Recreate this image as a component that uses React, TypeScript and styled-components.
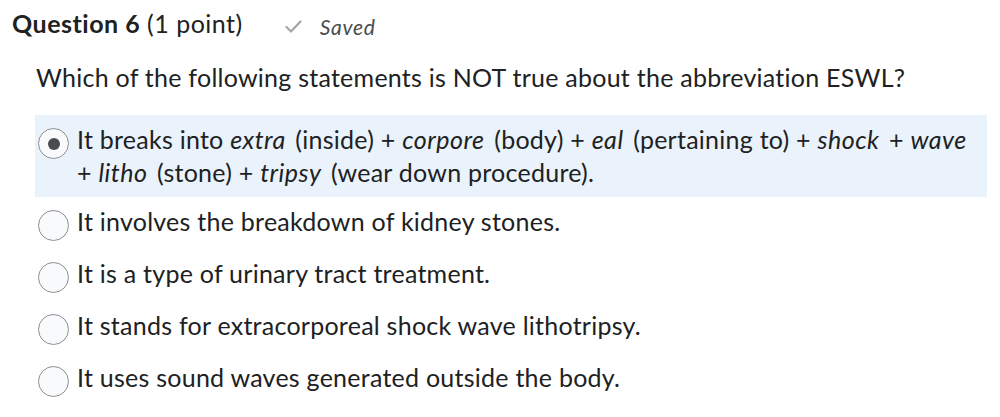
import React, { FC } from "react";
import styled, { createGlobalStyle } from "styled-components";

const GlobalStyle = createGlobalStyle`
  html, body {
    margin: 0;
    padding: 0;
    background: #ffffff;
  }
  body {
    font-family: Lato, "Noto Sans", sans-serif;
    color: #202122;
    font-variant-ligatures: none;
  }
`;

const Page = styled.div`
  width: 1000px;
  height: 417px;
  padding: 8px 0 0 12px;
  box-sizing: border-box;
  overflow: hidden;
`;

const Header = styled.div`
  display: flex;
  align-items: baseline;
  gap: 42px;
`;

const Title = styled.h2`
  margin: 0;
  font-size: 25px;
  line-height: 30px;
  letter-spacing: 0.5px;
  font-weight: 400;
  color: #202122;
  b {
    font-weight: 700;
  }
`;

const Status = styled.div`
  display: flex;
  align-items: center;
  gap: 18px;
  font-size: 21px;
  letter-spacing: 0.7px;
  font-style: italic;
  color: #494c4e;
`;

const Body = styled.div`
  padding-left: 24px;
`;

const Prompt = styled.p`
  margin: 22px 0 21px;
  font-size: 25px;
  line-height: 33px;
  letter-spacing: 0.25px;
`;

const Options = styled.div`
  display: flex;
  flex-direction: column;
  width: 952px;
  margin-left: -1px;
`;

const Option = styled.label<{ $selected?: boolean }>`
  display: flex;
  align-items: flex-start;
  gap: 8px;
  padding: 8px 16px 8px 3px;
  background: ${(p) => (p.$selected ? "#eaf2fb" : "transparent")};
  font-size: 25px;
  line-height: 33px;
  letter-spacing: 0.25px;
  i {
    font-style: italic;
    letter-spacing: 0.5px;
    padding-right: 3px;
  }
`;

const Radio = styled.span<{ $checked?: boolean }>`
  flex: none;
  width: 31px;
  height: 31px;
  margin-top: 5px;
  box-sizing: border-box;
  border-radius: 50%;
  border: 1.5px solid #8d9093;
  background: #f9fafc;
  display: flex;
  align-items: center;
  justify-content: center;
  &::after {
    content: "";
    display: ${(p) => (p.$checked ? "block" : "none")};
    width: 12px;
    height: 12px;
    border-radius: 50%;
    background: #494c4e;
  }
`;

const Check: FC = () => (
  <svg width="17" height="13" viewBox="0 0 17 13" fill="none">
    <path d="M1.5 7 L6 11.5 L15.5 1.5" stroke="#a3a6a8" strokeWidth="2.2" strokeLinecap="round" strokeLinejoin="round" />
  </svg>
);

const App: FC = () => (
  <>
    <GlobalStyle />
    <Page>
      <Header>
        <Title>
          <b>Question 6</b> (1 point)
        </Title>
        <Status>
          <Check />
          <span>Saved</span>
        </Status>
      </Header>
      <Body>
        <Prompt>Which of the following statements is NOT true about the abbreviation ESWL?</Prompt>
        <Options>
          <Option $selected>
            <Radio $checked />
            <span>
              It breaks into <i>extra</i> (inside) + <i>corpore</i> (body) + <i>eal</i> (pertaining to) + <i>shock</i> + <i>wave</i> + <i>litho</i> (stone) + <i>tripsy</i> (wear down procedure).
            </span>
          </Option>
          <Option>
            <Radio />
            <span>It involves the breakdown of kidney stones.</span>
          </Option>
          <Option>
            <Radio />
            <span>It is a type of urinary tract treatment.</span>
          </Option>
          <Option>
            <Radio />
            <span>It stands for extracorporeal shock wave lithotripsy.</span>
          </Option>
          <Option>
            <Radio />
            <span>It uses sound waves generated outside the body.</span>
          </Option>
        </Options>
      </Body>
    </Page>
  </>
);

export default App;
